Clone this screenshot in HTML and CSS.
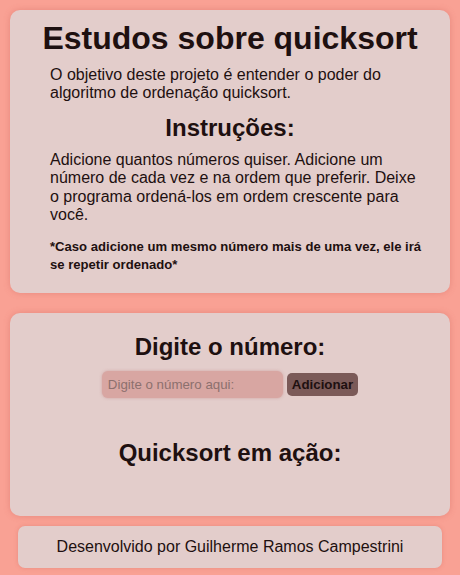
FILE: index.html
```html
<!DOCTYPE html>
<html lang="pt-BR">
<head>
<meta charset="utf-8">
<title>Estudos sobre quicksort</title>
<link rel="stylesheet" href="styles.css">
</head>
<body>
<main class="page">
  <section class="card intro">
    <h1 class="title">Estudos sobre quicksort</h1>
    <p class="text">O objetivo deste projeto é entender o poder do algoritmo de ordenação quicksort.</p>
    <h2 class="subtitle">Instruções:</h2>
    <p class="text">Adicione quantos números quiser. Adicione um número de cada vez e na ordem que preferir. Deixe o programa ordená-los em ordem crescente para você.</p>
    <p class="note">*Caso adicione um mesmo número mais de uma vez, ele irá se repetir ordenado*</p>
  </section>
  <section class="card action">
    <h2 class="subtitle">Digite o número:</h2>
    <form class="form">
      <input class="field" type="text" placeholder="Digite o número aqui:">
      <button class="btn" type="button">Adicionar</button>
    </form>
    <h2 class="subtitle result">Quicksort em ação:</h2>
  </section>
  <footer class="footer">Desenvolvido por Guilherme Ramos Campestrini</footer>
</main>
</body>
</html>
```
FILE: styles.css
```css
html, body {
  margin: 0;
  padding: 0;
}
body {
  background: #f9a194;
  font-family: Arial, "Liberation Sans", sans-serif;
  color: #1e1010;
}
.page {
  display: flex;
  flex-direction: column;
  align-items: center;
  padding: 10px 10px 7px;
  gap: 10px;
}
.card {
  box-sizing: border-box;
  width: 440px;
  background: #e3cdcb;
  border-radius: 10px;
  box-shadow: 0 0 6px rgba(200, 90, 80, 0.35);
}
.intro {
  padding: 10px 25px 19px 40px;
}
.title {
  margin: 0 -25px 0 -40px;
  font-size: 32px;
  font-weight: bold;
  text-align: center;
  line-height: 37px;
}
.text {
  margin: 16px 0 0;
  font-size: 16px;
  line-height: 18.4px;
}
.title + .text {
  margin-top: 9px;
}
.intro .subtitle {
  margin: 11px -25px 0 -40px;
  line-height: 28px;
}
.intro .subtitle + .text {
  margin-top: 9px;
}
.subtitle {
  font-size: 24px;
  font-weight: bold;
  text-align: center;
}
.note {
  margin: 14px 0 0;
  font-size: 13.1px;
  font-weight: bold;
  line-height: 18px;
}
.action {
  margin-top: 10px;
  height: 203px;
  padding-top: 20px;
}
.action .subtitle {
  margin: 0;
  line-height: 28px;
}
.form {
  display: flex;
  justify-content: center;
  align-items: center;
  gap: 4px;
  margin: 10px 0 0;
}
.field {
  box-sizing: border-box;
  width: 181px;
  height: 27px;
  border: none;
  border-radius: 6px;
  background: #d8a6a2;
  box-shadow: 0 0 3px rgba(190, 120, 115, 0.5);
  padding: 0 6px;
  font-family: Arial, "Liberation Sans", sans-serif;
  font-size: 13.3px;
  color: #1e1010;
  outline: none;
}
.field::placeholder {
  color: #8c706e;
}
.btn {
  box-sizing: border-box;
  height: 23px;
  padding: 0 5px;
  border: none;
  border-radius: 5px;
  background: #7b5a58;
  font-family: Arial, "Liberation Sans", sans-serif;
  font-size: 13.3px;
  font-weight: bold;
  color: #1e1010;
}
.result {
  margin-top: 41px !important;
}
.footer {
  box-sizing: border-box;
  width: 424px;
  height: 42px;
  display: flex;
  align-items: center;
  justify-content: center;
  background: #e3cdcb;
  border-radius: 7px;
  box-shadow: 0 0 4px rgba(200, 90, 80, 0.3);
  font-size: 16px;
}
```
